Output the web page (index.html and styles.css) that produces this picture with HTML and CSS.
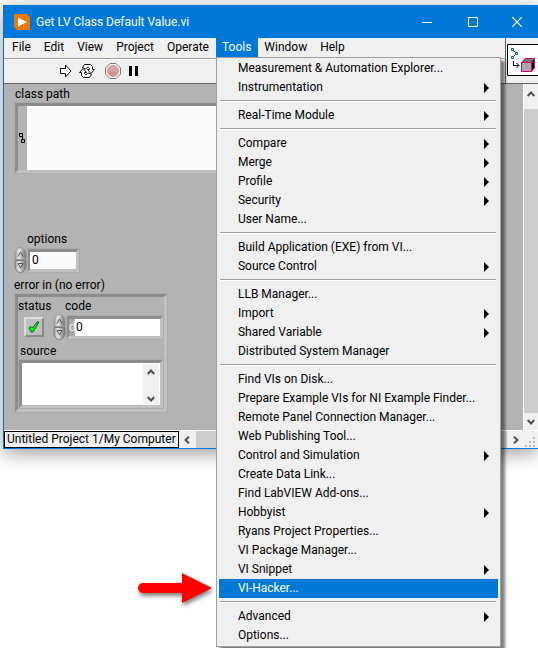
FILE: index.html
```html
<!DOCTYPE html>
<html lang="en">
<head>
<meta charset="utf-8">
<title>Get LV Class Default Value.vi</title>
<link rel="stylesheet" href="styles.css">
</head>
<body>
<svg class="defs" width="0" height="0" aria-hidden="true">
  <defs>
    <linearGradient id="knob" x1="0" x2="1"><stop offset="0" stop-color="#999"/><stop offset=".35" stop-color="#e6e6e6"/><stop offset="1" stop-color="#6e6e6e"/></linearGradient>
    <symbol id="spinner" viewBox="0 0 13 26">
      <path d="M1 12.500V7a5.500 6.500 0 0 1 11 0v5.500Z" fill="url(#knob)" stroke="#969696"/>
      <path d="M1 13.500V19a5.500 6.500 0 0 0 11 0v-5.500Z" fill="url(#knob)" stroke="#7c7c7c"/>
      <path d="M4 9.500 6.500 5 9 9.500" fill="none" stroke="#555"/>
      <path d="M4 16.500h5L6.500 21Z" fill="none" stroke="#555"/>
    </symbol>
    <symbol id="chevron-up" viewBox="0 0 8 8"><path d="M.7 6 4 2.500 7.300 6" fill="none" stroke="#505050" stroke-width="2"/></symbol>
    <symbol id="chevron-down" viewBox="0 0 8 8"><path d="M.7 2 4 5.500 7.300 2" fill="none" stroke="#505050" stroke-width="2"/></symbol>
    <symbol id="chevron-left" viewBox="0 0 8 8"><path d="M6 .7 2.500 4 6 7.300" fill="none" stroke="#505050" stroke-width="2"/></symbol>
    <symbol id="chevron-right" viewBox="0 0 8 8"><path d="M2 .7 5.500 4 2 7.300" fill="none" stroke="#505050" stroke-width="2"/></symbol>
  </defs>
</svg>

<main class="window">
  <header class="titlebar">
    <svg class="app-icon" width="16" height="16" viewBox="0 0 16 16"><path d="M0 0h13l3 3v13H3l-3-3Z" fill="#e8790c"/><path d="M4 3.500 13 8l-9 4.500Z" fill="#fff"/></svg>
    <h1 class="title">Get LV Class Default Value.vi</h1>
    <div class="window-buttons">
      <button type="button" aria-label="Minimize"><svg width="10" height="10"><path d="M0 5.500h10" stroke="#fff"/></svg></button>
      <button type="button" aria-label="Maximize"><svg width="10" height="10"><path d="M.5.5h9v9h-9Z" fill="none" stroke="#fff"/></svg></button>
      <button type="button" aria-label="Close"><svg width="10" height="10"><path d="m0 0 10 10M10 0 0 10" stroke="#fff" stroke-width="1.200"/></svg></button>
    </div>
  </header>

  <div class="top">
    <div class="bars">
      <nav class="menubar">
        <button type="button">File</button>
        <button type="button">Edit</button>
        <button type="button">View</button>
        <button type="button">Project</button>
        <button type="button">Operate</button>
        <div class="open-menu">
          <button type="button" class="active" aria-expanded="true">Tools</button>
          <div class="menu" role="menu">
            <button type="button" role="menuitem">Measurement &amp; Automation Explorer...</button>
            <button type="button" role="menuitem" class="sub">Instrumentation</button>
            <hr>
            <button type="button" role="menuitem" class="sub">Real-Time Module</button>
            <hr>
            <button type="button" role="menuitem" class="sub">Compare</button>
            <button type="button" role="menuitem" class="sub">Merge</button>
            <button type="button" role="menuitem" class="sub">Profile</button>
            <button type="button" role="menuitem" class="sub">Security</button>
            <button type="button" role="menuitem">User Name...</button>
            <hr>
            <button type="button" role="menuitem">Build Application (EXE) from VI...</button>
            <button type="button" role="menuitem" class="sub">Source Control</button>
            <hr>
            <button type="button" role="menuitem">LLB Manager...</button>
            <button type="button" role="menuitem" class="sub">Import</button>
            <button type="button" role="menuitem" class="sub">Shared Variable</button>
            <button type="button" role="menuitem">Distributed System Manager</button>
            <hr>
            <button type="button" role="menuitem">Find VIs on Disk...</button>
            <button type="button" role="menuitem">Prepare Example VIs for NI Example Finder...</button>
            <button type="button" role="menuitem">Remote Panel Connection Manager...</button>
            <button type="button" role="menuitem">Web Publishing Tool...</button>
            <button type="button" role="menuitem" class="sub">Control and Simulation</button>
            <button type="button" role="menuitem">Create Data Link...</button>
            <button type="button" role="menuitem">Find LabVIEW Add-ons...</button>
            <button type="button" role="menuitem" class="sub">Hobbyist</button>
            <button type="button" role="menuitem">Ryans Project Properties...</button>
            <button type="button" role="menuitem">VI Package Manager...</button>
            <button type="button" role="menuitem" class="sub">VI Snippet</button>
            <button type="button" role="menuitem" class="selected">VI-Hacker...</button>
            <hr>
            <button type="button" role="menuitem" class="sub">Advanced</button>
            <button type="button" role="menuitem">Options...</button>
            <svg class="pointer" width="82" height="40" viewBox="0 0 82 40"><path d="M9 14h39V4l30 15-30 15V24H9a5 5 0 0 1 0-10Z" fill="#f00"/></svg>
          </div>
        </div>
        <button type="button">Window</button>
        <button type="button">Help</button>
      </nav>
      <div class="toolbar">
        <button type="button" aria-label="Run"><svg width="12" height="14" viewBox="0 0 12 14"><path d="M.5 4.500h5V1L11 7l-5.500 6V9.500h-5Z" fill="#fff" stroke="#111"/></svg></button>
        <button type="button" aria-label="Run continuously"><svg width="16" height="14" viewBox="0 0 16 14"><path d="M3.500 3.500 5.500.5h6l2 2v3h2l-3.500 4-3.500-4h2v-1l-1-1H8L6.500 5Z" fill="#fff" stroke="#111"/><path d="M12.500 10.500l-2 3h-6l-2-2v-3h-2L4 4.500l3.500 4h-2v1l1 1H8L9.500 9Z" fill="#fff" stroke="#111"/></svg></button>
        <button type="button" aria-label="Abort"><svg width="16" height="16" viewBox="0 0 16 16"><path d="M5 .5h6L15.500 5v6L11 15.500H5L.5 11V5Z" fill="#f5f5f5" stroke="#777"/><circle cx="8" cy="8" r="5.500" fill="#d9a5a5" stroke="#c99"/><path d="M4 8.500h8a4 4 0 0 1-8 0Z" fill="#ce9494"/></svg></button>
        <button type="button" aria-label="Pause"><svg width="10" height="10" viewBox="0 0 10 10"><path d="M1 0h3v10H1ZM7 0h3v10H7Z"/></svg></button>
      </div>
    </div>
    <div class="vi-pane">
      <svg width="32" height="32" viewBox="0 0 32 32"><path d="M.5.500H40v31H.5Z" fill="#fff" stroke="#000"/><g fill="none" stroke="#006464"><path d="M4.500 4.500h2v2h-2ZM8.500 8.500h2v2h-2ZM4.500 12.500h2v2h-2ZM6 6.500l3 2M8.500 10.500l-2 2"/></g><path d="M6.500 17v4.500H12M9.500 19l2.500 2.500L9.500 24" fill="none" stroke="#000"/><path d="M14.500 18.500 18 14.500h9V24l-3.500 3.500Z" fill="#777"/><path d="m24.500 18.500 3-3.500v9l-3 3.500Z" fill="#100"/><path d="M14.500 18.500h10v9h-10ZM14.500 18.500l3.500-4h9.500V24l-3 3.500" fill="none" stroke="#d6006c"/><path d="M15 19h9v8h-9Z" fill="#aaa"/></svg>
    </div>
  </div>

  <div class="workspace">
    <section class="panel">
      <div class="group path-group">
        <label for="path">class path</label>
        <div class="bevel path-box">
          <svg width="9" height="12" viewBox="0 0 9 12"><path d="M1.500 1.500h3v3h-3ZM3.500 7.500h3v3h-3ZM4.500 4.500v3" fill="none" stroke="#000"/></svg>
          <input id="path" type="text">
        </div>
      </div>
      <div class="group options-group">
        <label for="options">options</label>
        <div class="numeric">
          <svg width="13" height="26"><use href="#spinner"/></svg>
          <div class="bevel"><input id="options" type="text" value="0"></div>
        </div>
      </div>
      <div class="group error-group">
        <span class="caption">error in (no error)</span>
        <div class="bevel cluster">
          <div class="cluster-row">
            <div class="status">
              <label for="status">status</label>
              <button type="button" id="status"><svg width="12" height="12" viewBox="0 0 12 12"><path d="M1 7 3 5.500 4.500 7 9 1h2L5 11H3Z" fill="#0f0" stroke="#042" stroke-width=".8"/></svg></button>
            </div>
            <div class="code">
              <label for="code">code</label>
              <div class="numeric">
                <svg width="13" height="26"><use href="#spinner"/></svg>
                <div class="bevel"><span class="radix">d</span><input id="code" type="text" value="0"></div>
              </div>
            </div>
          </div>
          <label class="source-label" for="source">source</label>
          <div class="bevel source-box">
            <textarea id="source"></textarea>
            <div class="mini-scroll">
              <svg width="8" height="8"><use href="#chevron-up"/></svg>
              <svg width="8" height="8"><use href="#chevron-down"/></svg>
            </div>
          </div>
        </div>
      </div>
    </section>
    <div class="scroll-v">
      <button type="button" aria-label="Scroll up"><svg width="8" height="8"><use href="#chevron-up"/></svg></button>
      <div class="thumb"></div>
      <button type="button" aria-label="Scroll down"><svg width="8" height="8"><use href="#chevron-down"/></svg></button>
    </div>
  </div>

  <footer class="statusbar">
    <button type="button" class="context">Untitled Project 1/My Computer</button>
    <button type="button" class="arrow" aria-label="Scroll left"><svg width="8" height="8"><use href="#chevron-left"/></svg></button>
    <div class="thumb"></div>
    <button type="button" class="arrow" aria-label="Scroll right"><svg width="8" height="8"><use href="#chevron-right"/></svg></button>
    <svg class="grip" width="14" height="14" viewBox="0 0 14 14"><path d="M9 3h2v2H9ZM5 7h2v2H5ZM9 7h2v2H9ZM1 11h2v2H1ZM5 11h2v2H5ZM9 11h2v2H9Z" fill="#b9b9b9"/></svg>
  </footer>
</main>
</body>
</html>
```
FILE: styles.css
```css
* {
  box-sizing: border-box;
}

body {
  min-height: 100vh;
  margin: 0;
  padding: 5px 0 0 3px;
  background: #fff;
  color: #000;
  font: 12px/16px Roboto, "Open Sans", sans-serif;
}

button,
input,
textarea {
  margin: 0;
  padding: 0;
  border: 0;
  border-radius: 0;
  background: none;
  color: inherit;
  font: inherit;
}

svg {
  display: block;
  flex: none;
}

.defs {
  position: absolute;
}

.window {
  border: 1px solid #0078d7;
  border-right: 0;
  background: #f0f0f0;
  box-shadow: 0 4px 18px rgba(0, 0, 0, 0.4);
}

.titlebar {
  display: flex;
  align-items: center;
  height: 32px;
  padding-left: 10px;
  background: #0078d7;
  color: #fff;
}

.title {
  flex: 1;
  margin: 0 0 0 6px;
  font-size: 12px;
  font-weight: 400;
}

.window-buttons {
  display: flex;
}

.window-buttons button {
  display: grid;
  place-items: center;
  width: 46px;
  height: 32px;
}

.window-buttons button:last-child {
  width: 42px;
}

.top {
  display: flex;
}

.bars {
  flex: 1;
}

.menubar {
  display: flex;
  height: 20px;
  padding-left: 2px;
}

.menubar > button,
.open-menu > button {
  height: 19px;
  padding: 0 7px 2px 6px;
}

.open-menu {
  position: relative;
}

.open-menu > .active {
  background: #0078d7;
  color: #fff;
}

.menu {
  position: absolute;
  z-index: 2;
  top: 19px;
  left: 0;
  width: 285px;
  padding: 1px 2px;
  border: 1px solid #a0a0a0;
  background: #f0f0f0;
  box-shadow: 4px 4px 3px rgba(0, 0, 0, 0.5);
}

.menu button {
  display: flex;
  justify-content: space-between;
  width: 100%;
  height: 19px;
  padding: 0 9px 0 19px;
  line-height: 19px;
  white-space: nowrap;
}

.menu .sub::after {
  content: "";
  align-self: center;
  border: solid transparent;
  border-width: 5px 0 5px 5px;
  border-left-color: #000;
}

.menu .selected {
  background: #0078d7;
  color: #fff;
}

.menu hr {
  height: 2px;
  margin: 3px 2px 4px 1px;
  border: 0;
  border-top: 1px solid #a0a0a0;
  background: #fff;
}

.pointer {
  position: absolute;
  right: 284px;
  bottom: 37px;
  filter: drop-shadow(1px 3px 2px rgba(0, 0, 0, 0.5));
}

.toolbar {
  display: flex;
  align-items: center;
  height: 26px;
  padding-left: 56px;
  border-top: 1px solid #a0a0a0;
  border-bottom: 1px solid #646464;
  box-shadow: inset 0 1px #fff;
}

.toolbar button + button {
  margin-left: 7px;
}

.toolbar button:nth-child(3) {
  margin-left: 10px;
}

.vi-pane {
  width: 33px;
  padding: 6px 0 0 1px;
  border-left: 1px solid #646464;
  border-bottom: 1px solid #646464;
  overflow: hidden;
}

.workspace {
  display: flex;
}

.panel {
  flex: 1;
  min-width: 0;
  padding: 2px 36px 17px 10px;
  border-right: 1px solid #fff;
  background: #b3b3b3;
}

.group label,
.caption {
  display: block;
}

.bevel {
  display: flex;
  border: 4px solid;
  border-color: #8c8c8c #c0c0c0 #c0c0c0 #8c8c8c;
  outline: 1px solid #ababab;
  outline-offset: -1px;
}

.path-group label {
  padding-left: 1px;
}

.path-box {
  height: 72px;
  align-items: center;
}

.path-box input {
  flex: 1;
  min-width: 0;
  height: 100%;
  background: #fafafa;
}

.options-group {
  margin-top: 57px;
}

.options-group label {
  padding-left: 13px;
}

.numeric {
  display: flex;
  align-items: center;
}

.numeric .bevel {
  width: 53px;
  height: 25px;
  border-left-width: 3px;
}

.numeric input {
  flex: 1;
  min-width: 0;
  padding-left: 2px;
  background: #fafafa;
}

.error-group {
  margin-top: 4px;
}

.cluster {
  flex-direction: column;
  width: 154px;
  height: 120px;
  padding: 1px 0 0;
}

.cluster-row {
  display: flex;
  height: 45px;
}

.status {
  width: 35px;
}

.status button {
  display: grid;
  place-items: center;
  width: 20px;
  height: 20px;
  margin: 3px 0 0 6px;
  border: 2px solid;
  border-color: #ddd #888 #888 #ddd;
  background: #bebebe;
}

.code label {
  padding-left: 12px;
}

.code .bevel {
  width: 98px;
}

.radix {
  width: 6px;
  color: #eee;
  background: #a8a8a8;
}

.code input {
  padding-left: 1px;
  background: #fff;
}

.source-label {
  padding-left: 2px;
}

.source-box {
  height: 50px;
}

.source-box textarea {
  flex: 1;
  min-width: 0;
  background: #fff;
  resize: none;
}

.mini-scroll {
  display: flex;
  flex-direction: column;
  justify-content: space-between;
  align-items: center;
  width: 17px;
  padding: 4px 0 1px;
  border: solid #fff;
  border-width: 1px 1px 1px 0;
  background: #f0f0f0;
}

.scroll-v {
  display: flex;
  flex-direction: column;
  width: 14px;
}

.scroll-v button {
  display: grid;
  place-items: center;
  height: 17px;
}

.scroll-v button:first-child {
  height: 25px;
  padding-bottom: 6px;
}

.thumb {
  flex: 1;
  background: #cdcdcd;
}

.statusbar {
  display: flex;
  height: 18px;
  border-top: 1px solid #fff;
}

.context {
  padding: 0 2px;
  border: 1px solid #000;
  line-height: 15px;
  white-space: nowrap;
}

.arrow {
  display: grid;
  place-items: center;
  width: 17px;
}

.grip {
  align-self: flex-end;
}
```
